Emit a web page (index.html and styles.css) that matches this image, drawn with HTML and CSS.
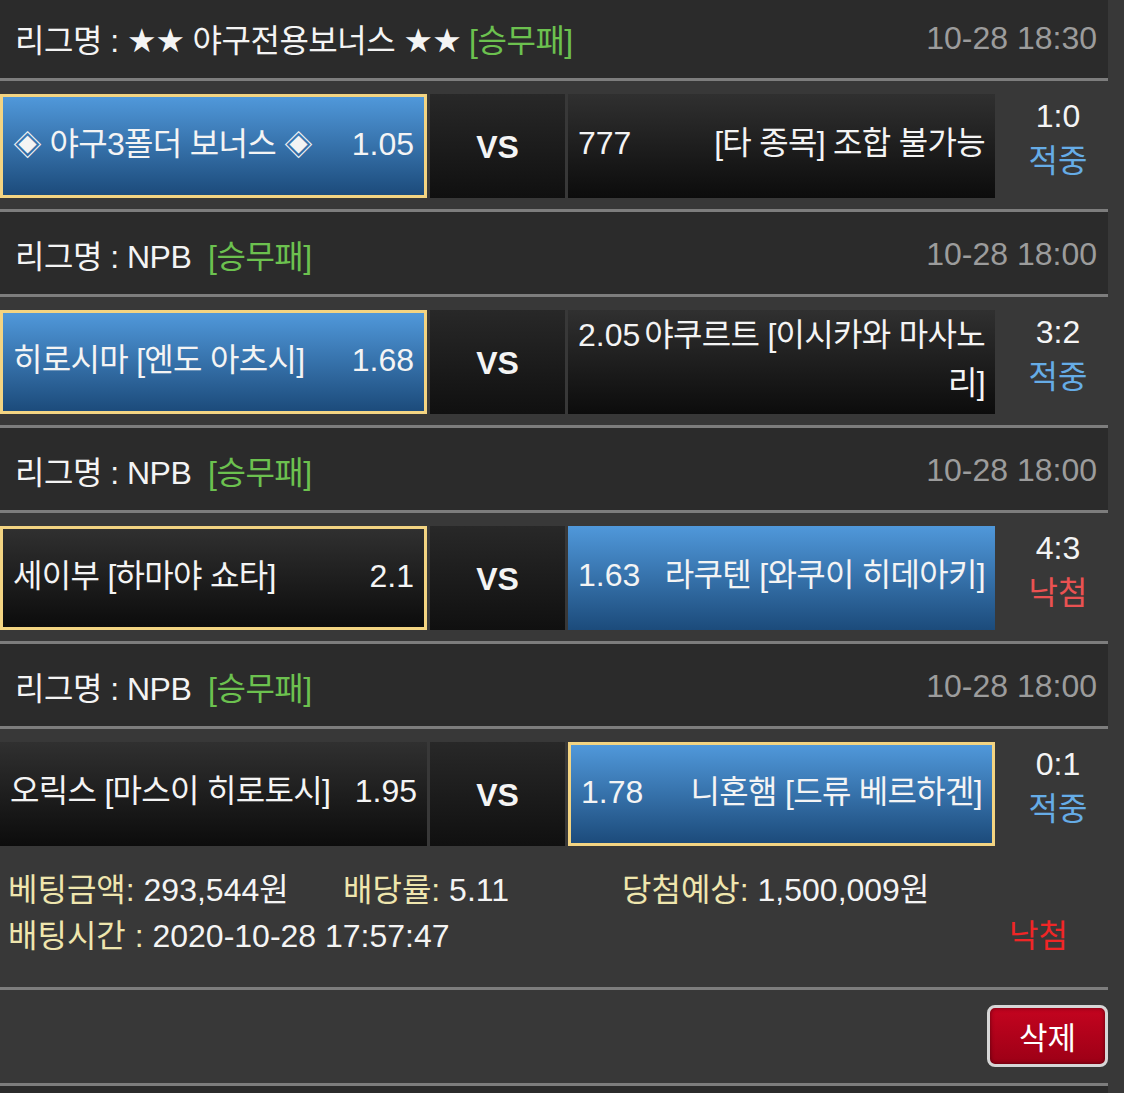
FILE: index.html
```html
<!DOCTYPE html>
<html lang="ko">
<head>
<meta charset="utf-8">
<title>베팅내역</title>
<link rel="stylesheet" href="styles.css">
</head>
<body>
<div class="board">
  <section class="game">
    <div class="league"><span class="lname">리그명 : <span class="star">★★</span> 야구전용보너스 <span class="star">★★</span> <span class="type">[승무패]</span></span><span class="time">10-28 18:30</span></div>
    <div class="rule"></div>
    <div class="match">
      <div class="team home sel pick"><div class="flow"><span class="odds">1.05</span><span class="name"><span class="dia">◈</span> 야구3폴더 보너스 <span class="dia">◈</span></span></div></div>
      <div class="vs">VS</div>
      <div class="team away"><div class="flow"><span class="odds">777</span><span class="name">[타 종목] 조합 불가능</span></div></div>
      <div class="score"><div>1:0</div><div class="hit">적중</div></div>
    </div>
    <div class="rule"></div>
  </section>

  <section class="game">
    <div class="league"><span class="lname">리그명 : NPB &nbsp;<span class="type">[승무패]</span></span><span class="time">10-28 18:00</span></div>
    <div class="rule"></div>
    <div class="match">
      <div class="team home sel pick"><div class="flow"><span class="odds">1.68</span><span class="name">히로시마 [엔도 아츠시]</span></div></div>
      <div class="vs">VS</div>
      <div class="team away"><div class="flow"><span class="odds">2.05</span><span class="name">야쿠르트 [이시카와 마사노리]</span></div></div>
      <div class="score"><div>3:2</div><div class="hit">적중</div></div>
    </div>
    <div class="rule"></div>
  </section>

  <section class="game">
    <div class="league"><span class="lname">리그명 : NPB &nbsp;<span class="type">[승무패]</span></span><span class="time">10-28 18:00</span></div>
    <div class="rule"></div>
    <div class="match">
      <div class="team home pick"><div class="flow"><span class="odds">2.1</span><span class="name">세이부 [하마야 쇼타]</span></div></div>
      <div class="vs">VS</div>
      <div class="team away sel"><div class="flow"><span class="odds">1.63</span><span class="name">라쿠텐 [와쿠이 히데아키]</span></div></div>
      <div class="score"><div>4:3</div><div class="miss">낙첨</div></div>
    </div>
    <div class="rule"></div>
  </section>

  <section class="game">
    <div class="league"><span class="lname">리그명 : NPB &nbsp;<span class="type">[승무패]</span></span><span class="time">10-28 18:00</span></div>
    <div class="rule"></div>
    <div class="match">
      <div class="team home"><div class="flow"><span class="odds">1.95</span><span class="name">오릭스 [마스이 히로토시]</span></div></div>
      <div class="vs">VS</div>
      <div class="team away sel pick"><div class="flow"><span class="odds">1.78</span><span class="name">니혼햄 [드류 베르하겐]</span></div></div>
      <div class="score"><div>0:1</div><div class="hit">적중</div></div>
    </div>
  </section>

  <div class="summary">
    <div class="sum-line">
      <span class="cell c1"><span class="label">베팅금액:</span> 293,544원</span>
      <span class="cell c2"><span class="label">배당률:</span> 5.11</span>
      <span class="cell"><span class="label">당첨예상:</span> 1,500,009원</span>
    </div>
    <div class="sum-line split">
      <span class="cell"><span class="label">배팅시간 :</span> 2020-10-28 17:57:47</span>
      <span class="result">낙첨</span>
    </div>
  </div>
  <div class="rule"></div>
  <div class="actions">
    <button class="del" type="button">삭제</button>
  </div>
  <div class="rule"></div>
  <div class="next"></div>
</div>
</body>
</html>
```

FILE: styles.css
```css
* {
  box-sizing: border-box;
  margin: 0;
  padding: 0;
}

html,
body {
  background: #383838;
}

body {
  width: 1124px;
  height: 1093px;
  overflow: hidden;
  font-family: "Liberation Sans", "Noto Sans CJK KR", sans-serif;
  font-size: 32px;
  color: #f4f4f4;
}

.board {
  width: 1108px;
  margin-top: -4px;
}

.league {
  height: 82px;
  background: #2b2b2b;
  display: flex;
  justify-content: space-between;
  align-items: center;
  padding: 2px 11px 0 15px;
  white-space: nowrap;
}

.lname {
  letter-spacing: -0.5px;
}

.star {
  font-family: "DejaVu Sans", sans-serif;
  font-size: 33px;
  letter-spacing: -1px;
}

.dia {
  font-size: 29px;
}

.type {
  color: #6cc14f;
}

.time {
  color: #9c9c9c;
}

.rule {
  height: 3px;
  background: #7d7d7d;
}

.match {
  height: 128px;
  display: flex;
  gap: 3px;
  padding: 13px 0 11px;
}

.team {
  width: 427px;
  flex: none;
  display: flex;
  align-items: center;
  padding: 0 10px 7px;
  line-height: 48px;
  background: linear-gradient(#303030, #0c0c0c);
}

.team.sel {
  background: linear-gradient(#5098da, #1c4b7b);
}

.team.pick {
  border: 3px solid #f3d482;
  padding-bottom: 4px;
}

.name {
  letter-spacing: -0.7px;
}

.flow {
  width: 100%;
}

.flow::after {
  content: "";
  display: block;
  clear: both;
}

.home .odds {
  float: right;
}

.home .flow {
  text-align: left;
}

.away .odds {
  float: left;
  margin-right: 4px;
}

.away .flow {
  text-align: right;
}

.vs {
  width: 135px;
  flex: none;
  display: flex;
  align-items: center;
  justify-content: center;
  padding-top: 3px;
  font-weight: bold;
  background: linear-gradient(#282828, #101010);
}

.score {
  flex: 1;
  padding-left: 10px;
  text-align: center;
  line-height: 45px;
}

.hit {
  color: #66ace6;
}

.miss {
  color: #ea5252;
}

.summary {
  height: 130px;
  padding: 10px 0 0 8px;
  line-height: 46px;
}

.sum-line {
  display: flex;
  white-space: nowrap;
}

.sum-line.split {
  justify-content: space-between;
  padding-right: 40px;
}

.c1 {
  width: 335px;
}

.c2 {
  width: 279px;
}

.label {
  color: #efe6ae;
}

.result {
  color: #f02626;
}

.actions {
  height: 93px;
  display: flex;
  justify-content: flex-end;
  align-items: center;
  padding-bottom: 2px;
}

.del {
  width: 121px;
  height: 62px;
  border: 3px solid #d6d6d6;
  border-radius: 8px;
  background: linear-gradient(#c4041f, #9c0016);
  color: #ffffff;
  font-family: "Liberation Sans", "Noto Sans CJK KR", sans-serif;
  font-size: 31px;
  box-shadow: inset 0 0 4px rgba(0, 0, 0, 0.5);
}

.next {
  height: 20px;
  background: #2b2b2b;
}
```
